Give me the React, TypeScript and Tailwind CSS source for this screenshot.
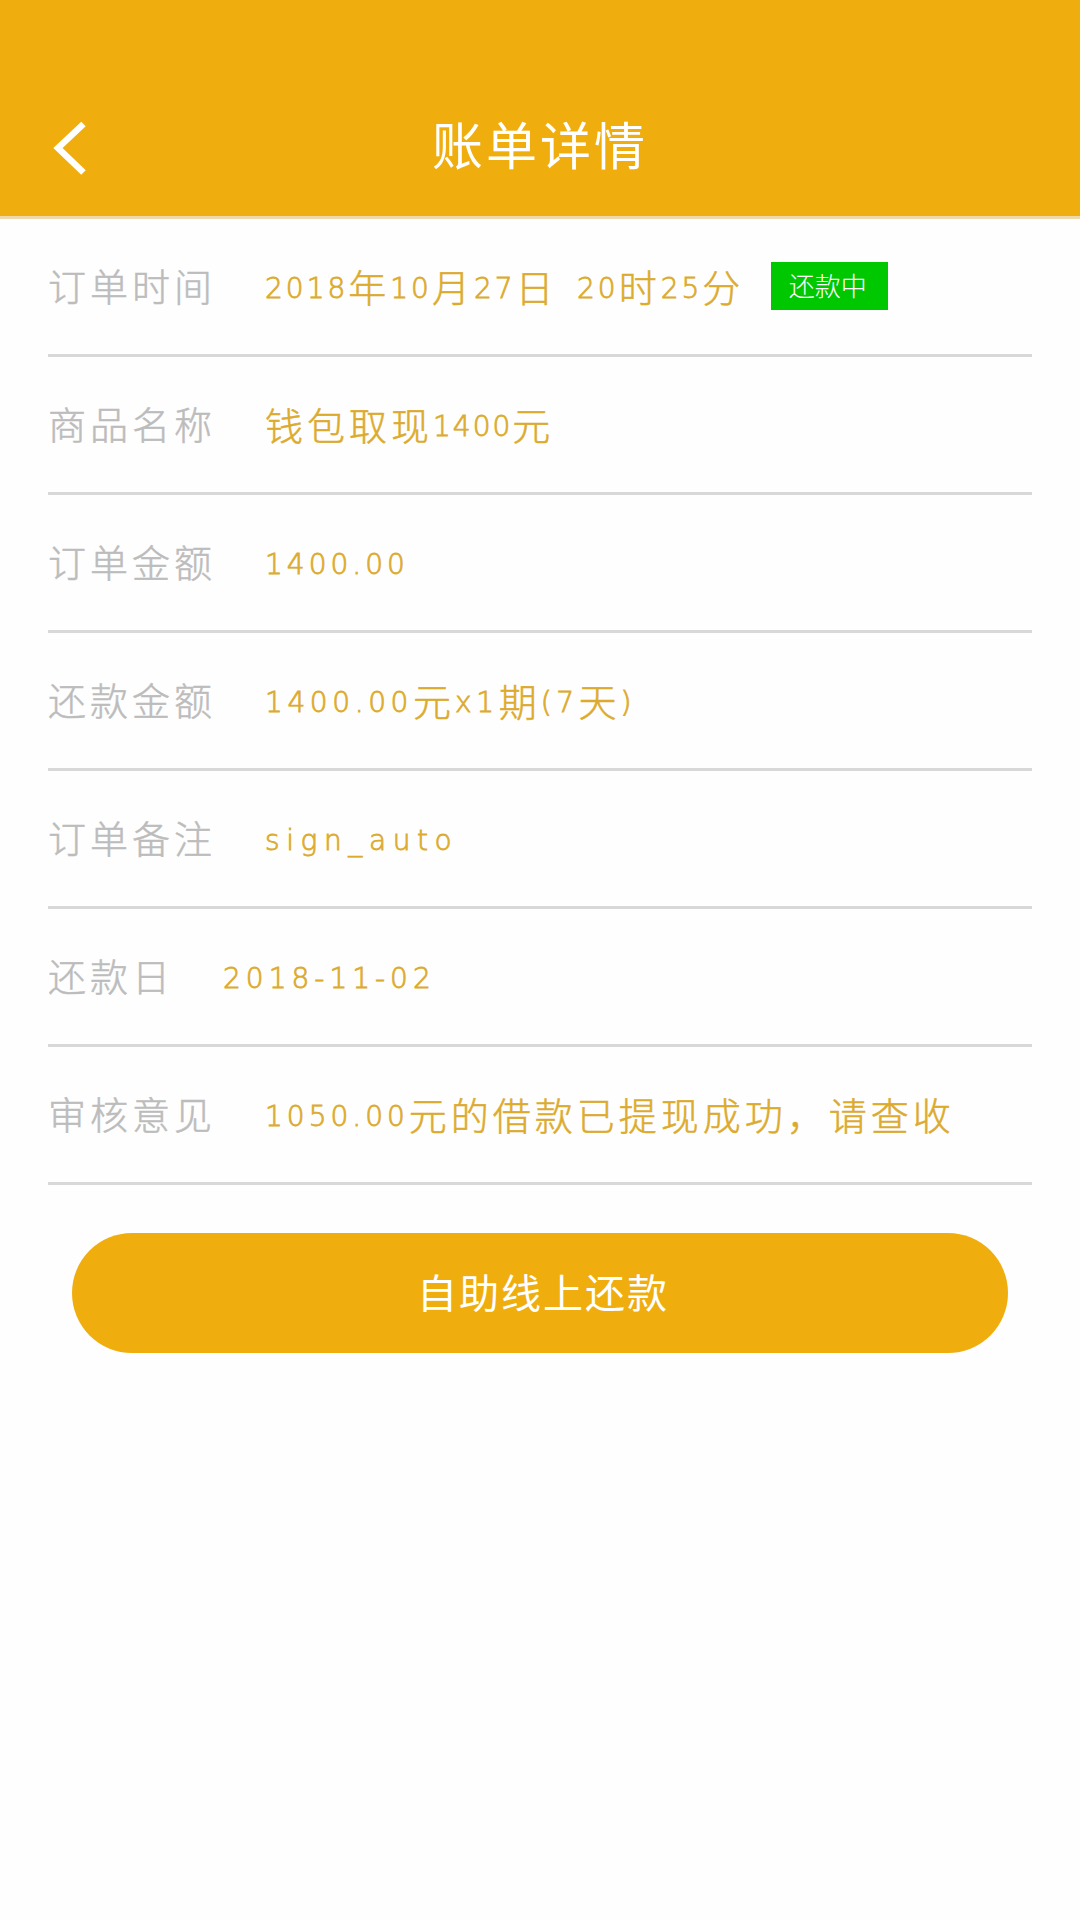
import clsx from 'clsx'

interface BillRow {
  label: string
  value: string
  tracking: string
  status?: string
}

const rows: BillRow[] = [
  { label: '订单时间', value: '2018年10月27日 20时25分', tracking: 'tracking-[3px]', status: '还款中' },
  { label: '商品名称', value: '钱包取现1400元', tracking: 'tracking-[2px]' },
  { label: '订单金额', value: '1400.00', tracking: 'tracking-[4px]' },
  { label: '还款金额', value: '1400.00元x1期(7天)', tracking: 'tracking-[4.6px]' },
  { label: '订单备注', value: 'sign_auto', tracking: 'tracking-[6.6px]' },
  { label: '还款日', value: '2018-11-02', tracking: 'tracking-[5px]' },
  { label: '审核意见', value: '1050.00元的借款已提现成功，请查收', tracking: 'tracking-[4px]' },
]

// Latin letters and digits are set smaller and wider than the Chinese glyphs
function ValueText({ text, tracking }: { text: string; tracking: string }) {
  return (
    <span className="text-[38px] tracking-[4px] whitespace-pre text-[#dcab2e] [word-spacing:7px] [-webkit-text-stroke:0.5px_#dcab2e]">
      {text.split(/([\x21-\x7e]+)/).filter(Boolean).map((part, i) =>
        /^[\x21-\x7e]/.test(part) ? (
          <span
            key={i}
            className={clsx("align-[4px] font-['DejaVu_Sans',sans-serif] text-[28px] leading-none font-extralight [-webkit-text-stroke:0.8px_#dcab2e]", tracking)}
          >
            {part}
          </span>
        ) : (
          part
        )
      )}
    </span>
  )
}

export default function App() {
  return (
    <div className="min-h-[1920px] w-full bg-[#fefefe] font-['Noto_Sans_CJK_SC',sans-serif] font-light">
      <header className="grid h-[219px] grid-cols-[1fr_auto_1fr] items-center border-b-[3px] border-[#efd9ab] bg-[#f0ad0e] pt-[79px]">
        <button className="ml-[50px] w-10" aria-label="返回">
          <svg width="40" height="60" viewBox="0 0 40 60" fill="none" stroke="#fff" strokeWidth="6.5">
            <path d="M33.5 6 8 30l25.500 24.500" />
          </svg>
        </button>
        <h1 className="pb-2 text-[51px] leading-none font-normal tracking-[3px] text-white">账单详情</h1>
      </header>

      <main className="px-12">
        {rows.map((row) => (
          <div key={row.label} className="flex h-[138px] items-center border-b-[3px] border-[#d8d8d8] pb-px leading-none">
            <span className="mr-[49px] pb-0.5 text-[38px] tracking-[4px] text-[#bcbcbc] [-webkit-text-stroke:0.5px_#bcbcbc]">
              {row.label}
            </span>
            <ValueText text={row.value} tracking={row.tracking} />
            {row.status && (
              <span className="ml-[27px] flex h-12 w-[117px] items-center justify-center bg-[#00c800] pr-1 pb-0.5 text-[26px] text-white">
                {row.status}
              </span>
            )}
          </div>
        ))}

        <div className="px-6 pt-12">
          <button className="h-[120px] w-full rounded-full bg-[#f0ad0e] pb-1 pl-1.5 text-[40px] font-normal tracking-[2px] text-white">
            自助线上还款
          </button>
        </div>
      </main>
    </div>
  )
}
